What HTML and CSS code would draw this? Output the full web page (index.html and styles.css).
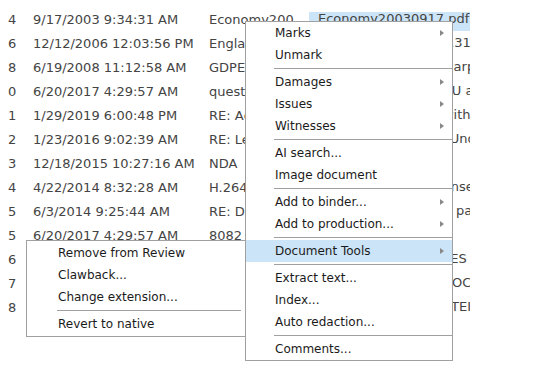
FILE: index.html
```html
<!DOCTYPE html>
<html lang="en">
<head>
    <meta charset="UTF-8">
    <title>Documents</title>
    <link rel="stylesheet" href="styles.css">
</head>
<body>
<div id="app">
    <div class="grid">
        <div class="row"><span class="c1">4</span><span class="c2">9/17/2003 9:34:31 AM</span><span class="c3">Economy200</span><span class="c4 selected">Economy20030917.pdf</span></div>
        <div class="row"><span class="c1">6</span><span class="c2">12/12/2006 12:03:56 PM</span><span class="c3">England</span><span class="c4">England-GDP-2006-131:20.msg</span></div>
        <div class="row"><span class="c1">8</span><span class="c2">6/19/2008 11:12:58 AM</span><span class="c3">GDPEurope</span><span class="c4">GDP Europe 2008 Sharp</span></div>
        <div class="row"><span class="c1">0</span><span class="c2">6/20/2017 4:29:57 AM</span><span class="c3">questions</span><span class="c4">questions over the EU and UK</span></div>
        <div class="row"><span class="c1">1</span><span class="c2">1/29/2019 6:00:48 PM</span><span class="c3">RE: Agreement</span><span class="c4">RE: Agreement OK with Ann</span></div>
        <div class="row"><span class="c1">2</span><span class="c2">1/23/2016 9:02:39 AM</span><span class="c3">RE: Letter</span><span class="c4">RE: Letter of intent, Under</span></div>
        <div class="row"><span class="c1">3</span><span class="c2">12/18/2015 10:27:16 AM</span><span class="c3">NDA</span><span class="c4"></span></div>
        <div class="row"><span class="c1">4</span><span class="c2">4/22/2014 8:32:28 AM</span><span class="c3">H.264</span><span class="c4">H.264 patent - a license</span></div>
        <div class="row"><span class="c1">5</span><span class="c2">6/3/2014 9:25:44 AM</span><span class="c3">RE: Draft</span><span class="c4">RE: Draft agreement part 2</span></div>
        <div class="row"><span class="c1">5</span><span class="c2">6/20/2017 4:29:57 AM</span><span class="c3">8082</span><span class="c4"></span></div>
        <div class="row"><span class="c1">6</span><span class="c2">5/14/2012 3:11:09 PM</span><span class="c3">Minutes</span><span class="c4">Meeting notes, MODES</span></div>
        <div class="row"><span class="c1">7</span><span class="c2">8/2/2013 1:45:20 PM</span><span class="c3">Memo</span><span class="c4">Memo to counsel - DOC</span></div>
        <div class="row"><span class="c1">8</span><span class="c2">2/9/2015 10:05:33 AM</span><span class="c3">Letter</span><span class="c4">Letter of intent, PROTEIN</span></div>
    </div>

    <ul class="menu main-menu">
        <li class="item">Marks<i class="arrow"></i></li>
        <li class="item">Unmark</li>
        <li class="sep"></li>
        <li class="item">Damages<i class="arrow"></i></li>
        <li class="item">Issues<i class="arrow"></i></li>
        <li class="item">Witnesses<i class="arrow"></i></li>
        <li class="sep"></li>
        <li class="item">AI search...</li>
        <li class="item">Image document</li>
        <li class="sep"></li>
        <li class="item">Add to binder...<i class="arrow"></i></li>
        <li class="item">Add to production...<i class="arrow"></i></li>
        <li class="sep"></li>
        <li class="item active">Document Tools<i class="arrow"></i></li>
        <li class="sep"></li>
        <li class="item">Extract text...</li>
        <li class="item">Index...</li>
        <li class="item">Auto redaction...</li>
        <li class="sep"></li>
        <li class="item">Comments...</li>
    </ul>

    <ul class="menu sub-menu">
        <li class="item">Remove from Review</li>
        <li class="item">Clawback...</li>
        <li class="item">Change extension...</li>
        <li class="sep"></li>
        <li class="item">Revert to native</li>
    </ul>
</div>
</body>
</html>
```

FILE: styles.css
```css
* {
    margin: 0;
    padding: 0;
}

ul {
    list-style: none;
}

html, body, #app {
    width: 100%;
    height: 100%;
    overflow: hidden;
    background: #fff;
}

body {
    font-family: "DejaVu Sans", Verdana, sans-serif;
    font-size: 12px;
}

#app {
    position: relative;
}

.grid {
    padding-top: 7px;
    color: #444;
    font-size: 13px;
}

.grid .row {
    height: 24px;
    display: flex;
    align-items: center;
    white-space: nowrap;
}

.grid .c1 {
    width: 33px;
    padding-left: 8px;
    box-sizing: border-box;
}

.grid .c2 {
    width: 176px;
}

.grid .c3 {
    width: 100px;
    overflow: hidden;
}

.grid .c4 {
    align-self: flex-start;
    margin-top: 5px;
    width: 161px;
    height: 19px;
    line-height: 13px;
    padding-left: 9px;
    box-sizing: border-box;
    overflow: hidden;
}

.grid .c4.selected {
    background: #cce4f7;
}

.menu {
    position: absolute;
    background: #fff;
    border: 1px solid #a0a0a0;
    color: #1b1b1b;
    font-size: 12px;
}

.menu .item {
    height: 22px;
    line-height: 22px;
    display: flex;
    align-items: center;
    white-space: nowrap;
}

.menu .item.active {
    background: #cce4f7;
}

.menu .sep {
    height: 1px;
    background: #a0a0a0;
    margin: 2px 0 2px 28px;
}

.menu .arrow {
    margin-left: auto;
    margin-right: 8px;
    width: 0;
    height: 0;
    border-left: 4px solid #888;
    border-top: 3.5px solid transparent;
    border-bottom: 3.5px solid transparent;
}

.main-menu {
    left: 245px;
    top: 21px;
    width: 206px;
    z-index: 2;
}

.main-menu .item {
    padding-left: 29px;
}

.sub-menu {
    left: 26px;
    top: 240px;
    width: 218px;
    padding: 1px 0;
    z-index: 1;
}

.sub-menu .item {
    padding-left: 31px;
}

.sub-menu .sep {
    margin: 2px 4px 2px 30px;
}
```
